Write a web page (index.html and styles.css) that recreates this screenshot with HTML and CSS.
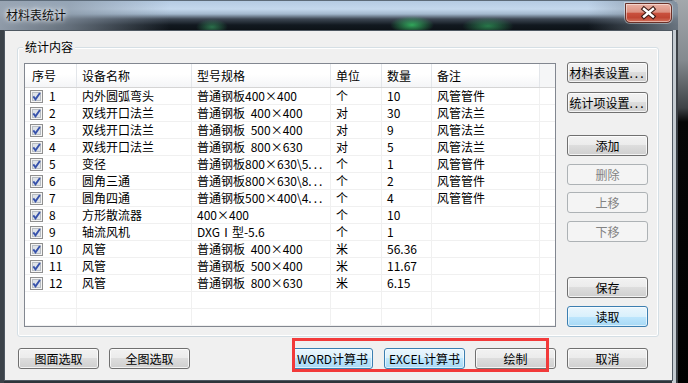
FILE: index.html
```html
<!DOCTYPE html>
<html lang="zh-CN">
<head>
<meta charset="utf-8">
<title>材料表统计</title>
<link rel="stylesheet" href="styles.css">
</head>
<body>
<div class="window">
  <div class="titlebar">
    <span class="title">材料表统计</span>
    <button class="close" aria-label="关闭">
      <svg width="45" height="18" viewBox="0 0 45 18"><path d="M18 5 L27 12.5 M27 5 L18 12.5" stroke="#3d1a14" stroke-width="4.6" stroke-linecap="square" fill="none"/><path d="M18 5 L27 12.5 M27 5 L18 12.5" stroke="#fff" stroke-width="2.4" stroke-linecap="square" fill="none"/></svg>
    </button>
  </div>
  <div class="client">
    <div class="group">
      <div class="legend">统计内容</div>
      <div class="group-body">
        <div class="listview">
          <div class="lv-header">
            <div class="h h1">序号</div>
            <div class="h">设备名称</div>
            <div class="h">型号规格</div>
            <div class="h">单位</div>
            <div class="h">数量</div>
            <div class="h">备注</div>
            <div class="h hf"></div>
          </div>
          <div class="lv-row">
            <div class="c ck"><svg class="cb" width="13" height="13" viewBox="0 0 13 13"><rect x=".5" y=".5" width="12" height="12" fill="#f4f4f4" stroke="#8f8f8f"/><rect x="2.5" y="2.5" width="8" height="8" fill="#dfe3e8" stroke="#b8bdc3"/><path d="M3.3 6.4 L5.5 9.3 L9.9 3" fill="none" stroke="#3752ab" stroke-width="1.9"/></svg><span class="n">1</span></div>
            <div class="c">内外圆弧弯头</div><div class="c">普通钢板400×400</div><div class="c">个</div><div class="c">10</div><div class="c">风管管件</div><div class="c cf"></div>
          </div>
          <div class="lv-row">
            <div class="c ck"><svg class="cb" width="13" height="13" viewBox="0 0 13 13"><rect x=".5" y=".5" width="12" height="12" fill="#f4f4f4" stroke="#8f8f8f"/><rect x="2.5" y="2.5" width="8" height="8" fill="#dfe3e8" stroke="#b8bdc3"/><path d="M3.3 6.4 L5.5 9.3 L9.9 3" fill="none" stroke="#3752ab" stroke-width="1.9"/></svg><span class="n">2</span></div>
            <div class="c">双线开口法兰</div><div class="c">普通钢板 400×400</div><div class="c">对</div><div class="c">30</div><div class="c">风管法兰</div><div class="c cf"></div>
          </div>
          <div class="lv-row">
            <div class="c ck"><svg class="cb" width="13" height="13" viewBox="0 0 13 13"><rect x=".5" y=".5" width="12" height="12" fill="#f4f4f4" stroke="#8f8f8f"/><rect x="2.5" y="2.5" width="8" height="8" fill="#dfe3e8" stroke="#b8bdc3"/><path d="M3.3 6.4 L5.5 9.3 L9.9 3" fill="none" stroke="#3752ab" stroke-width="1.9"/></svg><span class="n">3</span></div>
            <div class="c">双线开口法兰</div><div class="c">普通钢板 500×400</div><div class="c">对</div><div class="c">9</div><div class="c">风管法兰</div><div class="c cf"></div>
          </div>
          <div class="lv-row">
            <div class="c ck"><svg class="cb" width="13" height="13" viewBox="0 0 13 13"><rect x=".5" y=".5" width="12" height="12" fill="#f4f4f4" stroke="#8f8f8f"/><rect x="2.5" y="2.5" width="8" height="8" fill="#dfe3e8" stroke="#b8bdc3"/><path d="M3.3 6.4 L5.5 9.3 L9.9 3" fill="none" stroke="#3752ab" stroke-width="1.9"/></svg><span class="n">4</span></div>
            <div class="c">双线开口法兰</div><div class="c">普通钢板 800×630</div><div class="c">对</div><div class="c">5</div><div class="c">风管法兰</div><div class="c cf"></div>
          </div>
          <div class="lv-row">
            <div class="c ck"><svg class="cb" width="13" height="13" viewBox="0 0 13 13"><rect x=".5" y=".5" width="12" height="12" fill="#f4f4f4" stroke="#8f8f8f"/><rect x="2.5" y="2.5" width="8" height="8" fill="#dfe3e8" stroke="#b8bdc3"/><path d="M3.3 6.4 L5.5 9.3 L9.9 3" fill="none" stroke="#3752ab" stroke-width="1.9"/></svg><span class="n">5</span></div>
            <div class="c">变径</div><div class="c">普通钢板800×630\5<span class="dots">...</span></div><div class="c">个</div><div class="c">1</div><div class="c">风管管件</div><div class="c cf"></div>
          </div>
          <div class="lv-row">
            <div class="c ck"><svg class="cb" width="13" height="13" viewBox="0 0 13 13"><rect x=".5" y=".5" width="12" height="12" fill="#f4f4f4" stroke="#8f8f8f"/><rect x="2.5" y="2.5" width="8" height="8" fill="#dfe3e8" stroke="#b8bdc3"/><path d="M3.3 6.4 L5.5 9.3 L9.9 3" fill="none" stroke="#3752ab" stroke-width="1.9"/></svg><span class="n">6</span></div>
            <div class="c">圆角三通</div><div class="c">普通钢板800×630\8<span class="dots">...</span></div><div class="c">个</div><div class="c">2</div><div class="c">风管管件</div><div class="c cf"></div>
          </div>
          <div class="lv-row">
            <div class="c ck"><svg class="cb" width="13" height="13" viewBox="0 0 13 13"><rect x=".5" y=".5" width="12" height="12" fill="#f4f4f4" stroke="#8f8f8f"/><rect x="2.5" y="2.5" width="8" height="8" fill="#dfe3e8" stroke="#b8bdc3"/><path d="M3.3 6.4 L5.5 9.3 L9.9 3" fill="none" stroke="#3752ab" stroke-width="1.9"/></svg><span class="n">7</span></div>
            <div class="c">圆角四通</div><div class="c">普通钢板500×400\4<span class="dots">...</span></div><div class="c">个</div><div class="c">4</div><div class="c">风管管件</div><div class="c cf"></div>
          </div>
          <div class="lv-row">
            <div class="c ck"><svg class="cb" width="13" height="13" viewBox="0 0 13 13"><rect x=".5" y=".5" width="12" height="12" fill="#f4f4f4" stroke="#8f8f8f"/><rect x="2.5" y="2.5" width="8" height="8" fill="#dfe3e8" stroke="#b8bdc3"/><path d="M3.3 6.4 L5.5 9.3 L9.9 3" fill="none" stroke="#3752ab" stroke-width="1.9"/></svg><span class="n">8</span></div>
            <div class="c">方形散流器</div><div class="c">400×400</div><div class="c">个</div><div class="c">10</div><div class="c"></div><div class="c cf"></div>
          </div>
          <div class="lv-row">
            <div class="c ck"><svg class="cb" width="13" height="13" viewBox="0 0 13 13"><rect x=".5" y=".5" width="12" height="12" fill="#f4f4f4" stroke="#8f8f8f"/><rect x="2.5" y="2.5" width="8" height="8" fill="#dfe3e8" stroke="#b8bdc3"/><path d="M3.3 6.4 L5.5 9.3 L9.9 3" fill="none" stroke="#3752ab" stroke-width="1.9"/></svg><span class="n">9</span></div>
            <div class="c">轴流风机</div><div class="c">DXGⅠ型-5.6</div><div class="c">个</div><div class="c">1</div><div class="c"></div><div class="c cf"></div>
          </div>
          <div class="lv-row">
            <div class="c ck"><svg class="cb" width="13" height="13" viewBox="0 0 13 13"><rect x=".5" y=".5" width="12" height="12" fill="#f4f4f4" stroke="#8f8f8f"/><rect x="2.5" y="2.5" width="8" height="8" fill="#dfe3e8" stroke="#b8bdc3"/><path d="M3.3 6.4 L5.5 9.3 L9.9 3" fill="none" stroke="#3752ab" stroke-width="1.9"/></svg><span class="n">10</span></div>
            <div class="c">风管</div><div class="c">普通钢板 400×400</div><div class="c">米</div><div class="c">56.36</div><div class="c"></div><div class="c cf"></div>
          </div>
          <div class="lv-row">
            <div class="c ck"><svg class="cb" width="13" height="13" viewBox="0 0 13 13"><rect x=".5" y=".5" width="12" height="12" fill="#f4f4f4" stroke="#8f8f8f"/><rect x="2.5" y="2.5" width="8" height="8" fill="#dfe3e8" stroke="#b8bdc3"/><path d="M3.3 6.4 L5.5 9.3 L9.9 3" fill="none" stroke="#3752ab" stroke-width="1.9"/></svg><span class="n">11</span></div>
            <div class="c">风管</div><div class="c">普通钢板 500×400</div><div class="c">米</div><div class="c">11.67</div><div class="c"></div><div class="c cf"></div>
          </div>
          <div class="lv-row">
            <div class="c ck"><svg class="cb" width="13" height="13" viewBox="0 0 13 13"><rect x=".5" y=".5" width="12" height="12" fill="#f4f4f4" stroke="#8f8f8f"/><rect x="2.5" y="2.5" width="8" height="8" fill="#dfe3e8" stroke="#b8bdc3"/><path d="M3.3 6.4 L5.5 9.3 L9.9 3" fill="none" stroke="#3752ab" stroke-width="1.9"/></svg><span class="n">12</span></div>
            <div class="c">风管</div><div class="c">普通钢板 800×630</div><div class="c">米</div><div class="c">6.15</div><div class="c"></div><div class="c cf"></div>
          </div>
          <div class="lv-row">
            <div class="c"></div><div class="c"></div><div class="c"></div><div class="c"></div><div class="c"></div><div class="c"></div><div class="c cf"></div>
          </div>
          <div class="lv-row">
            <div class="c"></div><div class="c"></div><div class="c"></div><div class="c"></div><div class="c"></div><div class="c"></div><div class="c cf"></div>
          </div>
        </div>
        <div class="side">
          <button class="btn">材料表设置<span class="dots">...</span></button>
          <button class="btn s2">统计项设置<span class="dots">...</span></button>
          <button class="btn s3">添加</button>
          <button class="btn s4" disabled>删除</button>
          <button class="btn s5" disabled>上移</button>
          <button class="btn s6" disabled>下移</button>
          <button class="btn s7">保存</button>
          <button class="btn hot s8">读取</button>
        </div>
      </div>
    </div>
    <div class="bottom">
      <button class="btn">图面选取</button>
      <button class="btn b2">全图选取</button>
      <button class="btn hot b3">WORD计算书</button>
      <button class="btn hot b4">EXCEL计算书</button>
      <button class="btn b5">绘制</button>
      <button class="btn b6">取消</button>
      <div class="redbox"></div>
    </div>
  </div>
</div>
</body>
</html>
```

FILE: styles.css
```css
* { box-sizing: border-box; }
html, body { margin: 0; padding: 0; }
body {
  width: 688px;
  height: 383px;
  overflow: hidden;
  background: linear-gradient(to bottom, #a3a8ac 0, #848a8f 60px, #3e4246 108px, #060606 122px, #000 100%);
  font-family: "Noto Sans CJK SC", "Liberation Sans", sans-serif;
  font-size: 12px;
  color: #000;
}
.window {
  width: 678px;
  height: 383px;
  display: flex;
  flex-direction: column;
  border-top-right-radius: 7px;
  overflow: hidden;
  background: linear-gradient(to right, #3b4249 0, #3b4249 4px, #2e343a 4px, #2e343a 672px, #c4cbd1 672px, #c4cbd1 676px, #3b4046 676px);
}
.titlebar {
  height: 30px;
  flex: none;
  display: flex;
  align-items: flex-start;
  border-top: 1px solid #5d6b79;
  background:
    radial-gradient(16px 8px at 212px 26px, rgba(70, 200, 120, .5), rgba(70, 200, 120, 0)),
    radial-gradient(22px 9px at 412px 24px, rgba(60, 215, 110, .75), rgba(60, 215, 110, 0)),
    radial-gradient(26px 9px at 488px 25px, rgba(60, 200, 110, .55), rgba(60, 200, 110, 0)),
    linear-gradient(to right, rgba(150, 162, 176, .95) 0, rgba(135, 148, 162, .7) 70px, rgba(120, 130, 140, 0) 170px),
    linear-gradient(to left, rgba(120, 132, 144, .85) 0, rgba(120, 132, 144, 0) 90px),
    linear-gradient(to bottom, #b5cbe3 0, #c4d8ed 8px, #a3b8cd 13px, #3d4753 18px, #121920 24px, #0c1116 30px);
}
.title {
  margin: 7px 0 0 6px;
  line-height: 14px;
  font-size: 12px;
  color: #101010;
  text-shadow: 0 0 4px #fff, 0 0 7px rgba(255, 255, 255, .9);
}
.close {
  margin: 2px 6px 0 auto;
  width: 47px;
  height: 20px;
  padding: 0;
  border: 1px solid #6b3128;
  border-radius: 0 4px 5px 5px;
  background: linear-gradient(to bottom, #e9b1a4 0, #dc9181 45%, #c9503d 52%, #c04633 75%, #d2725c 100%);
  box-shadow: inset 0 0 0 1px rgba(255, 255, 255, .45), 0 0 0 1px rgba(255, 255, 255, .35);
  display: flex;
  align-items: center;
  justify-content: center;
}
.close svg { display: block; }
.client {
  margin-left: 4px;
  width: 669px;
  height: 351px;
  border: 1px solid #4f5862;
  background: #f0f0f0;
  display: flex;
  flex-direction: column;
}
.group {
  margin: 16px 0 0 12px;
  width: 642px;
  height: 290px;
  border: 1px solid #d5dfe5;
  border-radius: 3px;
  box-shadow: inset 0 0 0 1px #fff;
  display: flex;
  flex-direction: column;
}
.legend {
  align-self: flex-start;
  margin: -8px 0 0 5px;
  padding: 0 2px;
  background: #f0f0f0;
  line-height: 14px;
  font-size: 12px;
}
.group-body {
  display: flex;
  margin-top: 8px;
  padding-left: 6px;
  height: 265px;
}
.listview {
  margin-top: 1px;
  width: 532px;
  height: 264px;
  border: 1px solid #828790;
  background: #fff;
  overflow: hidden;
}
.lv-header, .lv-row {
  display: grid;
  grid-template-columns: 52px 115px 139px 51px 50px 108px 15px;
}
.lv-header {
  height: 24px;
  border-bottom: 1px solid #d5d5d5;
  background: linear-gradient(to bottom, #fff 0, #fff 45%, #f4f5f7 100%);
}
.h {
  line-height: 23px;
  padding-left: 5px;
  border-right: 1px solid #e3e6ea;
  white-space: nowrap;
}
.h1 { padding-left: 7px; }
.hf { border-right: none; background: #f5f6f7; }
.lv-row { height: 17px; }
.c {
  line-height: 16px;
  padding-left: 5px;
  border-right: 1px solid #f0f0f0;
  border-bottom: 1px solid #f0f0f0;
  white-space: nowrap;
  overflow: hidden;
  word-spacing: 3px;
}
.cf { border-right: none; }
.ck { display: flex; align-items: center; }
.cb { display: block; flex: none; }
.n { margin-left: 6px; }
.dots { letter-spacing: 2px; }
.side {
  margin-left: 11px;
  width: 81px;
  display: flex;
  flex-direction: column;
}
.btn {
  flex: none;
  width: 81px;
  height: 21px;
  padding: 0;
  border: 1px solid #707070;
  border-radius: 3px;
  background: linear-gradient(to bottom, #f2f2f2 0, #ebebeb 50%, #dddddd 50%, #cfcfcf 100%);
  box-shadow: inset 0 0 0 1px rgba(255, 255, 255, .75);
  font-family: "Noto Sans CJK SC", "Liberation Sans", sans-serif;
  font-size: 12px;
  line-height: 19px;
  color: #000;
  text-align: center;
  white-space: nowrap;
  overflow: hidden;
}
.btn.hot {
  border-color: #3c7fb1;
  background: linear-gradient(to bottom, #eaf6fd 0, #d9f0fc 50%, #bee6fd 50%, #a7d9f5 100%);
  box-shadow: inset 0 0 0 1px rgba(255, 255, 255, .6);
}
.btn:disabled {
  border-color: #adb2b5;
  background: #f4f4f4;
  color: #838383;
  box-shadow: none;
}
.s2 { margin-top: 9px; }
.s3 { margin-top: 22px; }
.s4 { margin-top: 8px; }
.s5 { margin-top: 7px; }
.s6 { margin-top: 8px; }
.s7 { margin-top: auto; }
.s8 { margin-top: 8px; border-color: #3399e0; }
.bottom {
  position: relative;
  display: flex;
  margin-top: 11px;
  padding-left: 13px;
}
.b2 { margin-left: 10px; }
.b3 { margin-left: 102px; }
.b4 { margin-left: 11px; }
.b5 { margin-left: 10px; }
.b6 { margin-left: 11px; }
.redbox {
  position: absolute;
  left: 287px;
  top: -10px;
  width: 257px;
  height: 34px;
  border: 3px solid #f23a3a;
}
```
